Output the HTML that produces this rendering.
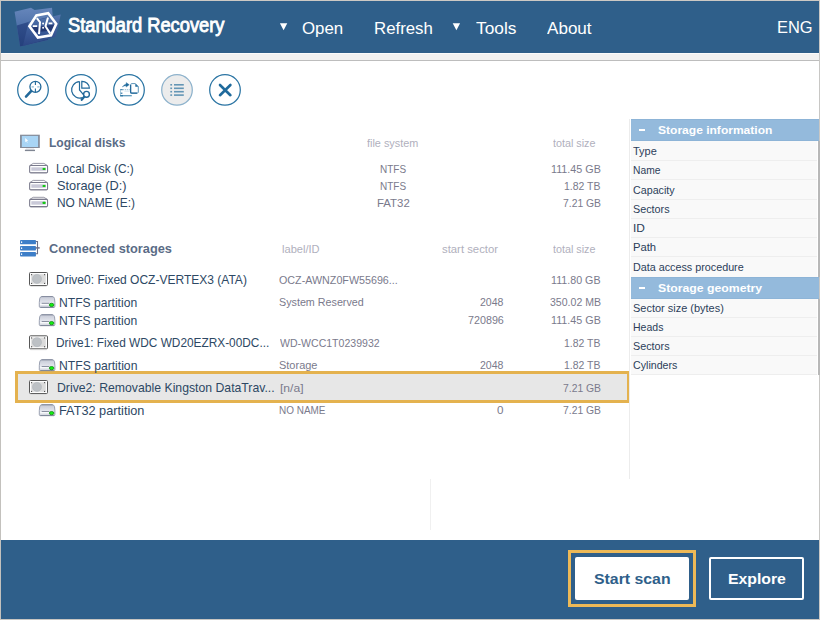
<!DOCTYPE html>
<html><head><meta charset="utf-8">
<style>
*{box-sizing:border-box;margin:0;padding:0}
html,body{width:820px;height:620px;overflow:hidden;background:#fff}
body{font-family:"Liberation Sans",sans-serif;position:relative}
.abs{position:absolute}
.x{position:absolute;white-space:nowrap;line-height:20px;height:20px;transform-origin:0 0;z-index:10}
#frame{position:absolute;left:0;top:0;width:820px;height:620px;border-top:1px solid #cdc9c4;border-left:1px solid #c3c1bd;border-bottom:1px solid #c9c6c2;border-right:1px solid #c8c7c5;z-index:50}
#hdr{position:absolute;left:0;top:0;width:820px;height:53px;background:#2f5f8a}
#strip{position:absolute;left:0;top:53px;width:820px;height:8px;background:#f1f1f1;border-bottom:1px solid #bdbdbd}
#foot{position:absolute;left:0;top:540px;width:820px;height:80px;background:#2f5f8a}
#sel{position:absolute;left:15px;top:371px;width:615px;height:32px;border:3px solid #e4b24f;background:#e7e7e7}
#rp{position:absolute;left:631px;top:119px;width:186px;height:256px;background:#f9f9f9}
.rb{position:absolute;left:818px;width:2px;background:#b8b8b8;z-index:60}
.hd{position:absolute;left:631px;width:188px;height:22px;background:#94badc;border-top:1px solid #8db4d7;border-bottom:1px solid #8db4d7}
.hd i{position:absolute;left:8px;top:9px;width:6px;height:2.4px;background:#fff}
.sp{position:absolute;left:631px;width:186px;height:1px;background:#eeeeee}
.vl{position:absolute;width:1px;background:#ececec}
</style></head><body>
<div id="hdr"></div>
<div id="strip"></div><div class="abs" style="left:0;top:53px;width:820px;height:1px;background:#fbfbfb"></div>
<div id="sel"></div>
<div class="vl" style="left:629px;top:119px;height:360px"></div>
<div class="vl" style="left:430px;top:479px;height:51px;background:#f0f0f0"></div>
<div id="rp"></div><div class="rb" style="top:141px;height:136px"></div><div class="rb" style="top:299px;height:76px"></div>
<div class="hd" style="top:119px"><i></i></div>
<div class="sp" style="top:160px"></div><div class="sp" style="top:179px"></div><div class="sp" style="top:199px"></div><div class="sp" style="top:218px"></div><div class="sp" style="top:237px"></div><div class="sp" style="top:256px"></div>
<div class="hd" style="top:277px"><i></i></div>
<div class="sp" style="top:317px"></div><div class="sp" style="top:336px"></div><div class="sp" style="top:355px"></div><div class="sp" style="top:374px"></div>
<div id="foot"></div>
<div class="abs" style="left:568px;top:550px;width:128px;height:57px;border:3px solid #edb957"></div>
<div class="abs" style="left:575px;top:557px;width:114px;height:43px;background:#fff;border-radius:2px"></div>
<div class="abs" style="left:709px;top:557px;width:95px;height:43px;border:2px solid #fff;border-radius:2px"></div>

<svg class="abs" style="left:0;top:0;z-index:5" width="820" height="620" viewBox="0 0 820 620">
<defs>
<linearGradient id="pg" x1="0" y1="0" x2="0" y2="1"><stop offset="0" stop-color="#c6cad6"/><stop offset="0.55" stop-color="#e2e4ec"/><stop offset="0.7" stop-color="#eceef3"/><stop offset="1" stop-color="#cdd0da"/></linearGradient>
<linearGradient id="fb" x1="0" y1="0" x2="0" y2="1"><stop offset="0" stop-color="#6283b8"/><stop offset="0.42" stop-color="#4d70a8"/><stop offset="0.44" stop-color="#2f4f8c"/><stop offset="1" stop-color="#27407a"/></linearGradient>
<linearGradient id="ff" x1="0" y1="0" x2="0" y2="1"><stop offset="0" stop-color="#5577ae"/><stop offset="0.5" stop-color="#3b5b98"/><stop offset="1" stop-color="#2c4684"/></linearGradient>
<linearGradient id="fb2" x1="0" y1="0" x2="0" y2="1"><stop offset="0" stop-color="#6686bb"/><stop offset="0.5" stop-color="#4e71a9"/><stop offset="1" stop-color="#4567a2"/></linearGradient>
<linearGradient id="fb3" x1="0" y1="0" x2="0" y2="1"><stop offset="0" stop-color="#33528f"/><stop offset="1" stop-color="#25407c"/></linearGradient>
</defs>
<!-- logo -->
<path d="M14.6 11.8 L31 7.8 L34.6 10 L52 7.8 L52.8 16.5 L48 40 L20.1 46.4 Z" fill="url(#fb2)"/>
<path d="M16.7 25.6 L30 21.6 L52.6 16 L48 40 L20.1 46.4 Z" fill="url(#fb3)"/>
<path d="M28.6 22.2 L60.8 14.5 L55.6 36.7 L22.9 46 Z" fill="url(#ff)"/>
<path d="M31 27.6 L55.2 24.6 L52.6 30.6 L33.6 32.6 Z" fill="#1c2f68" opacity="0.75"/>
<path d="M29.4 26.2 L36.4 15.4 L48.2 13.1 L56.2 23.8 L51 35.4 L37.9 37.5 Z" fill="none" stroke="#fff" stroke-width="2.6" stroke-linejoin="miter"/>
<path d="M36.8 18.2 L40 22.2 L39 34.2" fill="none" stroke="#fff" stroke-width="2"/>
<path d="M48 17.4 L45.5 26.2 L50.2 33.6" fill="none" stroke="#fff" stroke-width="2"/>
<path d="M32.8 26.2 H37.2 M48.6 23.4 H52.4" stroke="#fff" stroke-width="1.7"/>
<circle cx="43.1" cy="23.4" r="1" fill="#fff"/><circle cx="43.1" cy="27.8" r="1" fill="#fff"/>
<path d="M279.9 23.2 H287.3 L283.6 30.3 Z M452.7 23.2 H460.1 L456.4 30.3 Z" fill="#fff"/>
<!-- toolbar circles -->
<g fill="none" stroke="#2a74a3" stroke-width="1.25">
<circle cx="33" cy="89.9" r="15.3"/>
<circle cx="81" cy="89.9" r="15.3"/>
<circle cx="129" cy="89.9" r="15.3"/>
<circle cx="177" cy="89.9" r="15.3" fill="#ececec" stroke="#8db2cc"/>
<circle cx="225" cy="89.9" r="15.3"/>
</g>
<!-- icon1 magnifier -->
<g fill="none" stroke="#22699a">
<circle cx="35.4" cy="86.8" r="5.5" stroke-width="1.3"/>
<path d="M31.1 91.1 L26 96.7" stroke-width="2.5" stroke-linecap="round"/>
<path d="M35.4 81.6 V85 M35.4 88.6 V92" stroke-width="1.1"/>
<path d="M31.6 86.85 H33.9 M37.3 86.85 H39.6" stroke-width="1.3" stroke="#8fbad3"/>
</g>
<!-- icon2 pie -->
<g fill="none" stroke="#22699a" stroke-width="1.2">
<path d="M79.5 81.7 A8.2 8.2 0 1 0 82.6 97.6"/>
<path d="M79.5 81.6 V90 L83.4 94.7"/>
<path d="M81.8 81.3 V88.2 H89.4 A7.4 7 0 0 0 81.8 81.3 Z"/>
<circle cx="86.5" cy="94.3" r="2.9" fill="#fff" stroke-width="1.4"/>
<path d="M84.2 96.8 L81.7 99.8" stroke-width="2.2" stroke-linecap="round"/>
</g>
<!-- icon3 copy -->
<g fill="none" stroke="#2a709e" stroke-width="1.2">
<path d="M131.9 83.6 H135.4 L138.3 86.5 V92 Q138.3 93.2 137.1 93.2 H131.8 Q130.6 93.2 130.6 92 V84.9 Q130.6 83.6 131.9 83.6 Z" fill="#fff" stroke="#5d95b9" stroke-width="1"/>
<path d="M130.6 85 V92 Q130.6 93.2 131.8 93.2 H137" stroke="#24699b" stroke-width="1.3"/>
<path d="M135.3 83.7 L138.3 86.7 H135.3 Z" fill="#1f6a9c" stroke="none"/>
<path d="M122.2 87 Q124.2 84.3 126.2 83.9 L126.2 82.5 L129.3 84.8 L126.2 87.1 L126.2 85.9 Q124.4 85.7 122.2 87 Z" fill="#1f6a9c" stroke="#1f6a9c" stroke-width="0.3"/>
<path d="M120.2 89.7 H122.8" stroke="#2a709e" stroke-width="1"/>
<path d="M122.8 89.7 H129.8" stroke="#86b4cf" stroke-width="0.9" stroke-dasharray="1.3 0.7"/>
<path d="M124.4 91.2 H129.4" stroke="#c4dbe8" stroke-width="0.7"/>
<path d="M120.5 90 V96" stroke="#8fbad2" stroke-width="0.8"/>
<path d="M120.2 95.7 H131.8" stroke="#5f9abd" stroke-width="1.3"/>
<path d="M120.2 95.7 H123" stroke="#2f76a3" stroke-width="1.3"/>
<path d="M120.8 93.2 H122.4" stroke="#1f6a9c" stroke-width="1.1"/>
</g>
<!-- icon4 list -->
<g fill="#6496b5">
<rect x="170.3" y="84" width="1.8" height="1.6"/><rect x="174" y="84" width="9.8" height="1.6"/>
<rect x="170.3" y="87.5" width="1.8" height="1.6"/><rect x="174" y="87.5" width="9.8" height="1.6"/>
<rect x="170.3" y="90.9" width="1.8" height="1.6"/><rect x="174" y="90.9" width="9.8" height="1.6"/>
<rect x="170.3" y="94.3" width="1.8" height="1.6"/><rect x="174" y="94.3" width="9.8" height="1.6"/>
</g>
<!-- icon5 X -->
<path d="M220 85 L230.4 95.2 M230.4 85 L220 95.2" stroke="#1f6a9c" stroke-width="2.6" stroke-linecap="round" fill="none"/>

<!-- monitor -->
<rect x="20.05" y="134.7" width="19.75" height="13.3" fill="#858b98"/>
<rect x="21.8" y="135.9" width="16.3" height="11.1" fill="#a9d5f5"/>
<path d="M26 148.3 H34 V149.6 H26 Z" fill="#e4e6ec"/>
<path d="M24.9 150.4 H35" stroke="#7f8592" stroke-width="1.4"/>
<path d="M25.2 138.1 L25.2 142.2 L26.3 141.2 L27.1 142.8 L27.6 142.5 L26.9 141 L28.2 140.7 Z" fill="#fff" opacity="0.95"/>

<g transform="translate(29,163)">
<path d="M4.2 0.4 H14.9 L18.4 2.5 H0.8 Z" fill="#fcfcfd" stroke="#8e8e9e" stroke-width="0.9" stroke-linejoin="round"/>
<rect x="0.65" y="2.45" width="17.9" height="7.3" rx="1.1" fill="#fff" stroke="#7b7b8d" stroke-width="1.1"/>
<path d="M1.4 9.9 H17.8" stroke="#7b7b8d" stroke-width="0.7"/>
<rect x="2.3" y="4.3" width="14.5" height="3.5" fill="#c9c9d8"/>
<rect x="13.6" y="4.9" width="2.9" height="2.2" rx="0.5" fill="#14c814"/>
</g>
<g transform="translate(29,180)">
<path d="M4.2 0.4 H14.9 L18.4 2.5 H0.8 Z" fill="#fcfcfd" stroke="#8e8e9e" stroke-width="0.9" stroke-linejoin="round"/>
<rect x="0.65" y="2.45" width="17.9" height="7.3" rx="1.1" fill="#fff" stroke="#7b7b8d" stroke-width="1.1"/>
<path d="M1.4 9.9 H17.8" stroke="#7b7b8d" stroke-width="0.7"/>
<rect x="2.3" y="4.3" width="14.5" height="3.5" fill="#c9c9d8"/>
<rect x="13.6" y="4.9" width="2.9" height="2.2" rx="0.5" fill="#14c814"/>
</g>
<g transform="translate(29,196.9)">
<path d="M4.2 0.4 H14.9 L18.4 2.5 H0.8 Z" fill="#fcfcfd" stroke="#8e8e9e" stroke-width="0.9" stroke-linejoin="round"/>
<rect x="0.65" y="2.45" width="17.9" height="7.3" rx="1.1" fill="#fff" stroke="#7b7b8d" stroke-width="1.1"/>
<path d="M1.4 9.9 H17.8" stroke="#7b7b8d" stroke-width="0.7"/>
<rect x="2.3" y="4.3" width="14.5" height="3.5" fill="#c9c9d8"/>
<rect x="13.6" y="4.9" width="2.9" height="2.2" rx="0.5" fill="#14c814"/>
</g>

<!-- storages icon -->
<g fill="#3d7ec8">
<rect x="20.05" y="240.05" width="15.9" height="4.3" rx="0.7"/>
<rect x="20.05" y="246.05" width="15.9" height="4.45" rx="0.7"/>
<rect x="20.05" y="252.05" width="15.9" height="4.45" rx="0.7"/>
</g>
<g fill="#f4f8fd"><rect x="21" y="241.2" width="1.2" height="1.8" rx="0.5"/><rect x="21" y="247.3" width="1.2" height="1.8" rx="0.5"/><rect x="21" y="253.3" width="1.2" height="1.8" rx="0.5"/></g>
<path d="M35.8 241.5 H37.5 V253.8 H35.8" fill="none" stroke="#6c7088" stroke-width="1.1"/>
<path d="M35.6 247.9 H39.7" stroke="#6c7088" stroke-width="1.5"/>

<g transform="translate(29,272)">
<rect x="0.5" y="0.5" width="18" height="13" rx="0.9" fill="#fdfdfd" stroke="#575757" stroke-width="1"/>
<rect x="2.2" y="2.2" width="14.6" height="9.6" fill="#dbdbdb"/>
<circle cx="8" cy="6.9" r="4.5" fill="#bdc1c5" stroke="#afb3bb" stroke-width="0.6"/>
<rect x="2" y="2.1" width="1.1" height="1.1" fill="#555"/><rect x="15" y="2.1" width="1.1" height="1.1" fill="#555"/>
<rect x="2" y="10.9" width="1.1" height="1.1" fill="#555"/><rect x="15" y="10.9" width="1.1" height="1.1" fill="#555"/>
<path d="M1.5 14.4 H17.5" stroke="#d4d4d4" stroke-width="0.7"/>
</g>
<g transform="translate(39.1,296.0)">
<path d="M3 0.5 H13 Q15 0.5 15.4 2.6 L15.8 6.5 V10.3 Q15.8 11.5 14.6 11.5 H1.4 Q0.2 11.5 0.2 10.3 V6.5 L0.6 2.6 Q1 0.5 3 0.5 Z" fill="url(#pg)" stroke="#9298aa" stroke-width="0.9"/>
<path d="M2.4 0.6 H13.6" stroke="#858c9e" stroke-width="1"/>
<path d="M2.6 7.3 H10.2" stroke="#8a90a0" stroke-width="1"/>
<path d="M1.2 8.5 H10" stroke="#fff" stroke-width="1" opacity="0.85"/>
<path d="M1.2 11.3 H14.8" stroke="#7c8496" stroke-width="0.9"/>
<ellipse cx="12.5" cy="8.9" rx="2.3" ry="1.6" fill="#12f012" stroke="#0d8a0d" stroke-width="0.8"/>
</g>
<g transform="translate(39.1,314.2)">
<path d="M3 0.5 H13 Q15 0.5 15.4 2.6 L15.8 6.5 V10.3 Q15.8 11.5 14.6 11.5 H1.4 Q0.2 11.5 0.2 10.3 V6.5 L0.6 2.6 Q1 0.5 3 0.5 Z" fill="url(#pg)" stroke="#9298aa" stroke-width="0.9"/>
<path d="M2.4 0.6 H13.6" stroke="#858c9e" stroke-width="1"/>
<path d="M2.6 7.3 H10.2" stroke="#8a90a0" stroke-width="1"/>
<path d="M1.2 8.5 H10" stroke="#fff" stroke-width="1" opacity="0.85"/>
<path d="M1.2 11.3 H14.8" stroke="#7c8496" stroke-width="0.9"/>
<ellipse cx="12.5" cy="8.9" rx="2.3" ry="1.6" fill="#12f012" stroke="#0d8a0d" stroke-width="0.8"/>
</g>
<g transform="translate(29,335.3)">
<rect x="0.5" y="0.5" width="18" height="13" rx="0.9" fill="#fdfdfd" stroke="#575757" stroke-width="1"/>
<rect x="2.2" y="2.2" width="14.6" height="9.6" fill="#dbdbdb"/>
<circle cx="8" cy="6.9" r="4.5" fill="#bdc1c5" stroke="#afb3bb" stroke-width="0.6"/>
<rect x="2" y="2.1" width="1.1" height="1.1" fill="#555"/><rect x="15" y="2.1" width="1.1" height="1.1" fill="#555"/>
<rect x="2" y="10.9" width="1.1" height="1.1" fill="#555"/><rect x="15" y="10.9" width="1.1" height="1.1" fill="#555"/>
<path d="M1.5 14.4 H17.5" stroke="#d4d4d4" stroke-width="0.7"/>
</g>
<g transform="translate(39.1,359.2)">
<path d="M3 0.5 H13 Q15 0.5 15.4 2.6 L15.8 6.5 V10.3 Q15.8 11.5 14.6 11.5 H1.4 Q0.2 11.5 0.2 10.3 V6.5 L0.6 2.6 Q1 0.5 3 0.5 Z" fill="url(#pg)" stroke="#9298aa" stroke-width="0.9"/>
<path d="M2.4 0.6 H13.6" stroke="#858c9e" stroke-width="1"/>
<path d="M2.6 7.3 H10.2" stroke="#8a90a0" stroke-width="1"/>
<path d="M1.2 8.5 H10" stroke="#fff" stroke-width="1" opacity="0.85"/>
<path d="M1.2 11.3 H14.8" stroke="#7c8496" stroke-width="0.9"/>
<ellipse cx="12.5" cy="8.9" rx="2.3" ry="1.6" fill="#12f012" stroke="#0d8a0d" stroke-width="0.8"/>
</g>
<g transform="translate(29,380)">
<rect x="0.5" y="0.5" width="18" height="13" rx="0.9" fill="#fdfdfd" stroke="#575757" stroke-width="1"/>
<rect x="2.2" y="2.2" width="14.6" height="9.6" fill="#dbdbdb"/>
<circle cx="8" cy="6.9" r="4.5" fill="#bdc1c5" stroke="#afb3bb" stroke-width="0.6"/>
<rect x="2" y="2.1" width="1.1" height="1.1" fill="#555"/><rect x="15" y="2.1" width="1.1" height="1.1" fill="#555"/>
<rect x="2" y="10.9" width="1.1" height="1.1" fill="#555"/><rect x="15" y="10.9" width="1.1" height="1.1" fill="#555"/>
<path d="M1.5 14.4 H17.5" stroke="#d4d4d4" stroke-width="0.7"/>
</g>
<g transform="translate(39.1,404.2)">
<path d="M3 0.5 H13 Q15 0.5 15.4 2.6 L15.8 6.5 V10.3 Q15.8 11.5 14.6 11.5 H1.4 Q0.2 11.5 0.2 10.3 V6.5 L0.6 2.6 Q1 0.5 3 0.5 Z" fill="url(#pg)" stroke="#9298aa" stroke-width="0.9"/>
<path d="M2.4 0.6 H13.6" stroke="#858c9e" stroke-width="1"/>
<path d="M2.6 7.3 H10.2" stroke="#8a90a0" stroke-width="1"/>
<path d="M1.2 8.5 H10" stroke="#fff" stroke-width="1" opacity="0.85"/>
<path d="M1.2 11.3 H14.8" stroke="#7c8496" stroke-width="0.9"/>
<ellipse cx="12.5" cy="8.9" rx="2.3" ry="1.6" fill="#12f012" stroke="#0d8a0d" stroke-width="0.8"/>
</g>
</svg>
<span class="x" style="left:68.00px;top:15px;font-size:19.7px;font-weight:normal;color:#ffffff;-webkit-text-stroke:0.85px #fff;transform-origin:0 17px;transform:scale(0.9282,1)">Standard Recovery</span>
<span class="x" style="left:302.00px;top:19px;font-size:17.0px;font-weight:normal;color:#ffffff;transform-origin:0 15px;transform:scale(0.9908,1)">Open</span>
<span class="x" style="left:374.00px;top:19px;font-size:17.0px;font-weight:normal;color:#ffffff;transform-origin:0 15px;transform:scale(0.9888,1)">Refresh</span>
<span class="x" style="left:476.00px;top:19px;font-size:17.0px;font-weight:normal;color:#ffffff;transform-origin:0 15px;transform:scale(1.0181,1)">Tools</span>
<span class="x" style="left:547.00px;top:19px;font-size:17.0px;font-weight:normal;color:#ffffff;transform-origin:0 15px;transform:scale(1.0040,1)">About</span>
<span class="x" style="left:777.00px;top:18px;font-size:17.0px;font-weight:normal;color:#ffffff;transform-origin:0 15px;transform:scale(0.9675,1)">ENG</span>
<span class="x" style="left:49.00px;top:133px;font-size:12.7px;font-weight:bold;color:#5a6c86;transform-origin:0 14px;transform:scale(0.9512,1)">Logical disks</span>
<span class="x" style="left:49.00px;top:239px;font-size:12.7px;font-weight:bold;color:#5a6c86;transform-origin:0 14px;transform:scale(1.0081,1)">Connected storages</span>
<span class="x" style="left:56.00px;top:159px;font-size:12.7px;font-weight:normal;color:#2d4864;transform-origin:0 14px;transform:scale(0.9352,1)">Local Disk (C:)</span>
<span class="x" style="left:57.00px;top:176px;font-size:12.7px;font-weight:normal;color:#2d4864;transform-origin:0 14px;transform:scale(1.0075,1)">Storage (D:)</span>
<span class="x" style="left:57.00px;top:193px;font-size:12.7px;font-weight:normal;color:#2d4864;transform-origin:0 14px;transform:scale(0.9384,1)">NO NAME (E:)</span>
<span class="x" style="left:56.00px;top:270px;font-size:12.7px;font-weight:normal;color:#2d4864;transform-origin:0 14px;transform:scale(0.9467,1)">Drive0: Fixed OCZ-VERTEX3 (ATA)</span>
<span class="x" style="left:59.00px;top:293px;font-size:12.7px;font-weight:normal;color:#2d4864;transform-origin:0 14px;transform:scale(0.9551,1)">NTFS partition</span>
<span class="x" style="left:59.00px;top:311px;font-size:12.7px;font-weight:normal;color:#2d4864;transform-origin:0 14px;transform:scale(0.9551,1)">NTFS partition</span>
<span class="x" style="left:56.00px;top:333px;font-size:12.7px;font-weight:normal;color:#2d4864;transform-origin:0 14px;transform:scale(0.9337,1)">Drive1: Fixed WDC WD20EZRX-00DC...</span>
<span class="x" style="left:59.00px;top:356px;font-size:12.7px;font-weight:normal;color:#2d4864;transform-origin:0 14px;transform:scale(0.9586,1)">NTFS partition</span>
<span class="x" style="left:57.00px;top:378px;font-size:12.7px;font-weight:normal;color:#2d4864;transform-origin:0 14px;transform:scale(0.9646,1)">Drive2: Removable Kingston DataTrav...</span>
<span class="x" style="left:59.00px;top:401px;font-size:12.7px;font-weight:normal;color:#2d4864;transform-origin:0 14px;transform:scale(1.0041,1)">FAT32 partition</span>
<span class="x" style="left:367.00px;top:133px;font-size:11.6px;font-weight:normal;color:#b0b0bd;transform-origin:0 14px;transform:scale(0.9369,1)">file system</span>
<span class="x" style="left:553.00px;top:133px;font-size:11.6px;font-weight:normal;color:#b0b0bd;transform-origin:0 14px;transform:scale(0.9281,1)">total size</span>
<span class="x" style="left:282.00px;top:239px;font-size:11.6px;font-weight:normal;color:#b0b0bd;transform-origin:0 14px;transform:scale(0.9575,1)">label/ID</span>
<span class="x" style="left:442.00px;top:239px;font-size:11.6px;font-weight:normal;color:#b0b0bd;transform-origin:0 14px;transform:scale(0.9767,1)">start sector</span>
<span class="x" style="left:553.00px;top:239px;font-size:11.6px;font-weight:normal;color:#b0b0bd;transform-origin:0 14px;transform:scale(0.9281,1)">total size</span>
<span class="x" style="left:380.00px;top:159px;font-size:11.6px;font-weight:normal;color:#7a7a8c;transform-origin:0 14px;transform:scale(0.8608,1)">NTFS</span>
<span class="x" style="left:380.00px;top:176px;font-size:11.6px;font-weight:normal;color:#7a7a8c;transform-origin:0 14px;transform:scale(0.8608,1)">NTFS</span>
<span class="x" style="left:377.00px;top:193px;font-size:11.6px;font-weight:normal;color:#7a7a8c;transform-origin:0 14px;transform:scale(0.9857,1)">FAT32</span>
<span class="x" style="left:551.00px;top:159px;font-size:11.6px;font-weight:normal;color:#7a7a8c;transform-origin:0 14px;transform:scale(0.9280,1)">111.45 GB</span>
<span class="x" style="left:564.00px;top:176px;font-size:11.6px;font-weight:normal;color:#7a7a8c;transform-origin:0 14px;transform:scale(0.9037,1)">1.82 TB</span>
<span class="x" style="left:563.00px;top:193px;font-size:11.6px;font-weight:normal;color:#7a7a8c;transform-origin:0 14px;transform:scale(0.8942,1)">7.21 GB</span>
<span class="x" style="left:279.00px;top:270px;font-size:11.6px;font-weight:normal;color:#7a7a8c;transform-origin:0 14px;transform:scale(0.9250,1)">OCZ-AWNZ0FW55696...</span>
<span class="x" style="left:551.00px;top:270px;font-size:11.6px;font-weight:normal;color:#7a7a8c;transform-origin:0 14px;transform:scale(0.9217,1)">111.80 GB</span>
<span class="x" style="left:279.00px;top:292px;font-size:11.6px;font-weight:normal;color:#7a7a8c;transform-origin:0 14px;transform:scale(0.9263,1)">System Reserved</span>
<span class="x" style="left:480.00px;top:292px;font-size:11.6px;font-weight:normal;color:#7a7a8c;transform-origin:0 14px;transform:scale(0.9104,1)">2048</span>
<span class="x" style="left:550.00px;top:292px;font-size:11.6px;font-weight:normal;color:#7a7a8c;transform-origin:0 14px;transform:scale(0.9094,1)">350.02 MB</span>
<span class="x" style="left:468.00px;top:310px;font-size:11.6px;font-weight:normal;color:#7a7a8c;transform-origin:0 14px;transform:scale(0.9261,1)">720896</span>
<span class="x" style="left:551.00px;top:310px;font-size:11.6px;font-weight:normal;color:#7a7a8c;transform-origin:0 14px;transform:scale(0.9280,1)">111.45 GB</span>
<span class="x" style="left:280.00px;top:333px;font-size:11.6px;font-weight:normal;color:#7a7a8c;transform-origin:0 14px;transform:scale(0.9094,1)">WD-WCC1T0239932</span>
<span class="x" style="left:564.00px;top:333px;font-size:11.6px;font-weight:normal;color:#7a7a8c;transform-origin:0 14px;transform:scale(0.9037,1)">1.82 TB</span>
<span class="x" style="left:279.00px;top:355px;font-size:11.6px;font-weight:normal;color:#7a7a8c;transform-origin:0 14px;transform:scale(0.9467,1)">Storage</span>
<span class="x" style="left:480.00px;top:355px;font-size:11.6px;font-weight:normal;color:#7a7a8c;transform-origin:0 14px;transform:scale(0.9104,1)">2048</span>
<span class="x" style="left:564.00px;top:355px;font-size:11.6px;font-weight:normal;color:#7a7a8c;transform-origin:0 14px;transform:scale(0.9037,1)">1.82 TB</span>
<span class="x" style="left:280.00px;top:378px;font-size:11.6px;font-weight:normal;color:#7a7a8c;transform-origin:0 14px;transform:scale(1.0444,1)">[n/a]</span>
<span class="x" style="left:563.00px;top:378px;font-size:11.6px;font-weight:normal;color:#7a7a8c;transform-origin:0 14px;transform:scale(0.8942,1)">7.21 GB</span>
<span class="x" style="left:279.00px;top:400px;font-size:11.6px;font-weight:normal;color:#7a7a8c;transform-origin:0 14px;transform:scale(0.8591,1)">NO NAME</span>
<span class="x" style="left:497.00px;top:400px;font-size:11.6px;font-weight:normal;color:#7a7a8c;transform-origin:0 14px;transform:scale(1.0058,1)">0</span>
<span class="x" style="left:563.00px;top:400px;font-size:11.6px;font-weight:normal;color:#7a7a8c;transform-origin:0 14px;transform:scale(0.8942,1)">7.21 GB</span>
<span class="x" style="left:658.00px;top:120px;font-size:11.6px;font-weight:bold;color:#ffffff;transform-origin:0 14px;transform:scale(1.0384,1)">Storage information</span>
<span class="x" style="left:633.00px;top:141px;font-size:11.6px;font-weight:normal;color:#2c3e5a;transform-origin:0 14px;transform:scale(0.9461,1)">Type</span>
<span class="x" style="left:633.00px;top:160px;font-size:11.6px;font-weight:normal;color:#2c3e5a;transform-origin:0 14px;transform:scale(0.8868,1)">Name</span>
<span class="x" style="left:633.00px;top:180px;font-size:11.6px;font-weight:normal;color:#2c3e5a;transform-origin:0 14px;transform:scale(0.9230,1)">Capacity</span>
<span class="x" style="left:633.00px;top:199px;font-size:11.6px;font-weight:normal;color:#2c3e5a;transform-origin:0 14px;transform:scale(0.9292,1)">Sectors</span>
<span class="x" style="left:633.00px;top:218px;font-size:11.6px;font-weight:normal;color:#2c3e5a;transform-origin:0 14px;transform:scale(1.0278,1)">ID</span>
<span class="x" style="left:633.00px;top:237px;font-size:11.6px;font-weight:normal;color:#2c3e5a;transform-origin:0 14px;transform:scale(0.9695,1)">Path</span>
<span class="x" style="left:633.00px;top:257px;font-size:11.6px;font-weight:normal;color:#2c3e5a;transform-origin:0 14px;transform:scale(0.9284,1)">Data access procedure</span>
<span class="x" style="left:658.00px;top:278px;font-size:11.6px;font-weight:bold;color:#ffffff;transform-origin:0 14px;transform:scale(1.0562,1)">Storage geometry</span>
<span class="x" style="left:633.00px;top:298px;font-size:11.6px;font-weight:normal;color:#2c3e5a;transform-origin:0 14px;transform:scale(0.9458,1)">Sector size (bytes)</span>
<span class="x" style="left:633.00px;top:317px;font-size:11.6px;font-weight:normal;color:#2c3e5a;transform-origin:0 14px;transform:scale(0.9071,1)">Heads</span>
<span class="x" style="left:633.00px;top:336px;font-size:11.6px;font-weight:normal;color:#2c3e5a;transform-origin:0 14px;transform:scale(0.9292,1)">Sectors</span>
<span class="x" style="left:633.00px;top:355px;font-size:11.6px;font-weight:normal;color:#2c3e5a;transform-origin:0 14px;transform:scale(0.9182,1)">Cylinders</span>
<span class="x" style="left:594.00px;top:569px;font-size:15.5px;font-weight:bold;color:#2f5f8a;transform-origin:0 15px;transform:scale(1.0214,1)">Start scan</span>
<span class="x" style="left:728.00px;top:569px;font-size:15.5px;font-weight:bold;color:#ffffff;transform-origin:0 15px;transform:scale(1.0183,1)">Explore</span>
<div id="frame"></div>
</body></html>
